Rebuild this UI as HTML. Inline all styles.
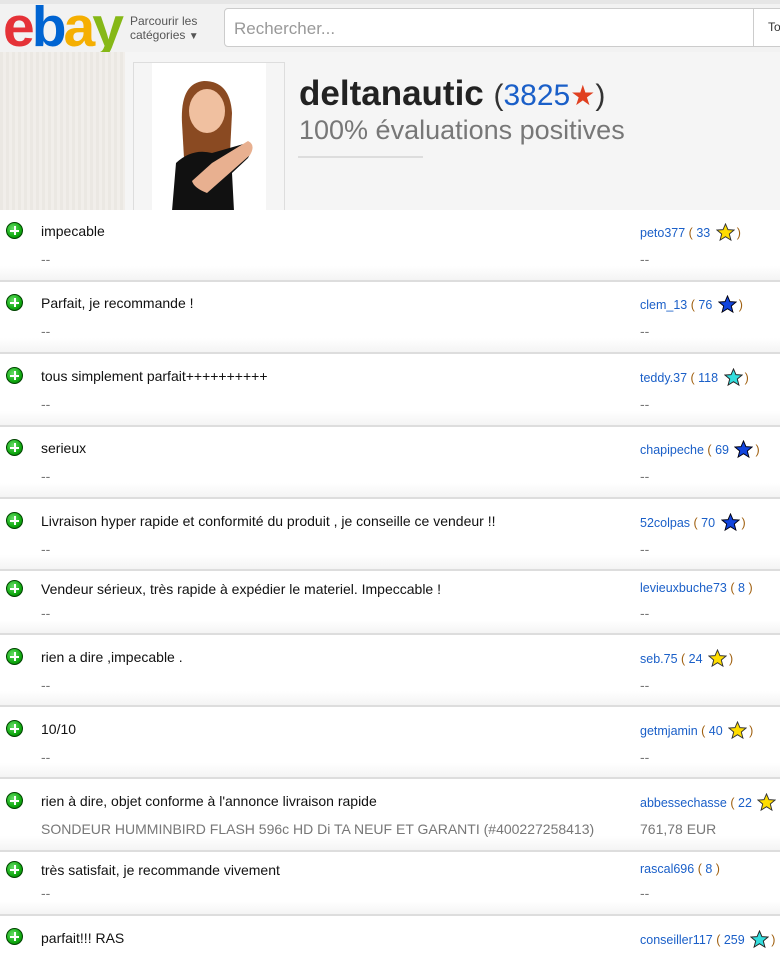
<!DOCTYPE html>
<html><head><meta charset="utf-8"><style>
*{margin:0;padding:0;box-sizing:border-box}
body{width:780px;height:956px;overflow:hidden;background:#fff;font-family:"Liberation Sans",Arial,sans-serif;position:relative}
.hdr{position:absolute;left:0;top:0;width:780px;height:52px;background:#f2f2f2;border-top:4px solid #e6e6e6}
.logo{position:absolute;left:3px;top:-10px;font-size:57px;font-weight:bold;letter-spacing:-3px;font-family:"Liberation Sans",sans-serif}
.cat{position:absolute;left:130px;top:10px;font-size:12px;color:#555;line-height:14px}
.search{position:absolute;left:224px;top:4px;width:560px;height:39px;background:#fff;border:1px solid #ccc;border-radius:4px;font-size:17px;color:#999;padding:10px 9px}
.banner{position:absolute;left:0;top:52px;width:780px;height:158px;background:#f5f5f5}
.tex{position:absolute;left:0;top:0;width:125px;height:158px;background:repeating-linear-gradient(90deg,#ebe8e3 0 3px,#f1eeea 3px 6px)}
.photo{position:absolute;left:133px;top:10px;width:152px;height:150px;border:1px solid #ddd;background:#f5f5f5}
.name{position:absolute;left:299px;top:22px;font-size:35px;font-weight:bold;color:#222;white-space:nowrap}
.name span{font-weight:normal;color:#333;font-size:30px}
.pos{position:absolute;left:299px;top:63px;font-size:27px;color:#777;white-space:nowrap}
.row{position:absolute;left:0;width:780px;border-bottom:2px solid #ddd;background:linear-gradient(#fff 80%,#f4f4f4)}
.ic{position:absolute;left:6px;width:17px;height:17px;border-radius:50%;background:radial-gradient(circle at 40% 35%,#6d6 0,#1a1 60%,#060 100%);border:1px solid #040}
.ic:before{content:"";position:absolute;left:3px;top:6.5px;width:9px;height:2px;background:#fff}
.ic:after{content:"";position:absolute;left:6.5px;top:3px;width:2px;height:9px;background:#fff}
.t{position:absolute;left:41px;font-size:14px;color:#111;white-space:nowrap}
.d{position:absolute;left:41px;font-size:14px;color:#777;white-space:nowrap}
.u{position:absolute;left:640px;font-size:12.5px;color:#1a5fc8;white-space:nowrap}
.u b{font-weight:normal;color:#a06010}
.d2{position:absolute;left:640px;font-size:14px;color:#777;white-space:nowrap}
svg.s{width:19px;height:19px;vertical-align:-5px;margin:0 2px}
</style></head><body>
<div class="hdr">
<div class="logo"><span style="color:#e53238">e</span><span style="color:#0064d2">b</span><span style="color:#f5af02">a</span><span style="color:#86b817">y</span></div>
<div class="cat">Parcourir les<br>catégories <span style="font-size:10px">▼</span></div>
<div class="search">Rechercher...</div>
<div style="position:absolute;left:753px;top:4px;width:1px;height:39px;background:#ccc"></div>
<div style="position:absolute;left:768px;top:16px;font-size:12px;color:#333">To</div>
</div>
<div class="banner">
<div class="tex"></div>
<div class="photo"><div style="position:absolute;left:18px;top:0;width:114px;height:148px;background:#fff">
<svg width="114" height="148" viewBox="0 0 114 148"><path d="M30 60 Q28 20 52 18 Q78 18 80 50 L78 90 L32 95Z" fill="#8a4a22"/><ellipse cx="55" cy="48" rx="18" ry="22" fill="#f0c0a0"/><path d="M20 148 L24 100 Q40 85 60 90 L95 80 Q102 85 96 95 L80 110 L82 148Z" fill="#111"/><path d="M60 100 L96 78 Q104 82 98 92 L55 130 Q42 125 40 118Z" fill="#e8b090"/></svg></div></div>
<div class="name">deltanautic <span>(<span style="color:#1a5fc8">3825</span><span style="color:#e04020;font-size:28px">★</span>)</span></div>
<div class="pos">100% évaluations positives</div>
<div style="position:absolute;left:298px;top:104px;width:125px;height:2px;background:#ddd"></div>
</div>

<svg width="0" height="0" style="position:absolute"><defs><path id="st" d="M10 1 L12.6 7 L19 7.4 L14 11.6 L15.7 18 L10 14.4 L4.3 18 L6 11.6 L1 7.4 L7.4 7Z"/></defs></svg>

<div class="row" style="top:210px;height:72px"><div class="ic" style="top:12px"></div><div class="t" style="top:13px">impecable</div><div class="d" style="top:41px">--</div><div class="u" style="top:13px">peto377 <b>(</b> 33 <svg class="s" viewBox="0 0 20 20"><use href="#st" fill="#fd0" stroke="#333"/></svg><b>)</b></div><div class="d2" style="top:41px">--</div></div>
<div class="row" style="top:282px;height:72px"><div class="ic" style="top:12px"></div><div class="t" style="top:13px">Parfait, je recommande !</div><div class="d" style="top:41px">--</div><div class="u" style="top:13px">clem_13 <b>(</b> 76 <svg class="s" viewBox="0 0 20 20"><use href="#st" fill="#1144dd" stroke="#001"/></svg><b>)</b></div><div class="d2" style="top:41px">--</div></div>
<div class="row" style="top:354px;height:73px"><div class="ic" style="top:13px"></div><div class="t" style="top:14px">tous simplement parfait++++++++++</div><div class="d" style="top:42px">--</div><div class="u" style="top:14px">teddy.37 <b>(</b> 118 <svg class="s" viewBox="0 0 20 20"><use href="#st" fill="#3dd" stroke="#222"/></svg><b>)</b></div><div class="d2" style="top:42px">--</div></div>
<div class="row" style="top:427px;height:72px"><div class="ic" style="top:12px"></div><div class="t" style="top:13px">serieux</div><div class="d" style="top:41px">--</div><div class="u" style="top:13px">chapipeche <b>(</b> 69 <svg class="s" viewBox="0 0 20 20"><use href="#st" fill="#1144dd" stroke="#001"/></svg><b>)</b></div><div class="d2" style="top:41px">--</div></div>
<div class="row" style="top:499px;height:72px"><div class="ic" style="top:13px"></div><div class="t" style="top:14px">Livraison hyper rapide et conformité du produit , je conseille ce vendeur !!</div><div class="d" style="top:42px">--</div><div class="u" style="top:14px">52colpas <b>(</b> 70 <svg class="s" viewBox="0 0 20 20"><use href="#st" fill="#1144dd" stroke="#001"/></svg><b>)</b></div><div class="d2" style="top:42px">--</div></div>
<div class="row" style="top:571px;height:64px"><div class="ic" style="top:9px"></div><div class="t" style="top:10px">Vendeur sérieux, très rapide à expédier le materiel. Impeccable !</div><div class="d" style="top:34px">--</div><div class="u" style="top:10px">levieuxbuche73 <b>(</b> 8 <b>)</b></div><div class="d2" style="top:34px">--</div></div>
<div class="row" style="top:635px;height:72px"><div class="ic" style="top:13px"></div><div class="t" style="top:14px">rien a dire ,impecable .</div><div class="d" style="top:42px">--</div><div class="u" style="top:14px">seb.75 <b>(</b> 24 <svg class="s" viewBox="0 0 20 20"><use href="#st" fill="#fd0" stroke="#333"/></svg><b>)</b></div><div class="d2" style="top:42px">--</div></div>
<div class="row" style="top:707px;height:72px"><div class="ic" style="top:13px"></div><div class="t" style="top:14px">10/10</div><div class="d" style="top:42px">--</div><div class="u" style="top:14px">getmjamin <b>(</b> 40 <svg class="s" viewBox="0 0 20 20"><use href="#st" fill="#fd0" stroke="#333"/></svg><b>)</b></div><div class="d2" style="top:42px">--</div></div>
<div class="row" style="top:779px;height:73px"><div class="ic" style="top:13px"></div><div class="t" style="top:14px">rien à dire, objet conforme à l'annonce livraison rapide</div><div class="d" style="top:42px">SONDEUR HUMMINBIRD FLASH 596c HD Di TA NEUF ET GARANTI (#400227258413)</div><div class="u" style="top:14px">abbessechasse <b>(</b> 22 <svg class="s" viewBox="0 0 20 20"><use href="#st" fill="#fd0" stroke="#333"/></svg></div><div class="d2" style="top:42px">761,78 EUR</div></div>
<div class="row" style="top:852px;height:64px"><div class="ic" style="top:9px"></div><div class="t" style="top:10px">très satisfait, je recommande vivement</div><div class="d" style="top:33px">--</div><div class="u" style="top:10px">rascal696 <b>(</b> 8 <b>)</b></div><div class="d2" style="top:33px">--</div></div>
<div class="row" style="top:916px;height:60px;border:none;background:#fff"><div class="ic" style="top:12px"></div><div class="t" style="top:14px">parfait!!! RAS</div><div class="u" style="top:14px">conseiller117 <b>(</b> 259 <svg class="s" viewBox="0 0 20 20"><use href="#st" fill="#3dd" stroke="#222"/></svg><b>)</b></div></div>
</body></html>
